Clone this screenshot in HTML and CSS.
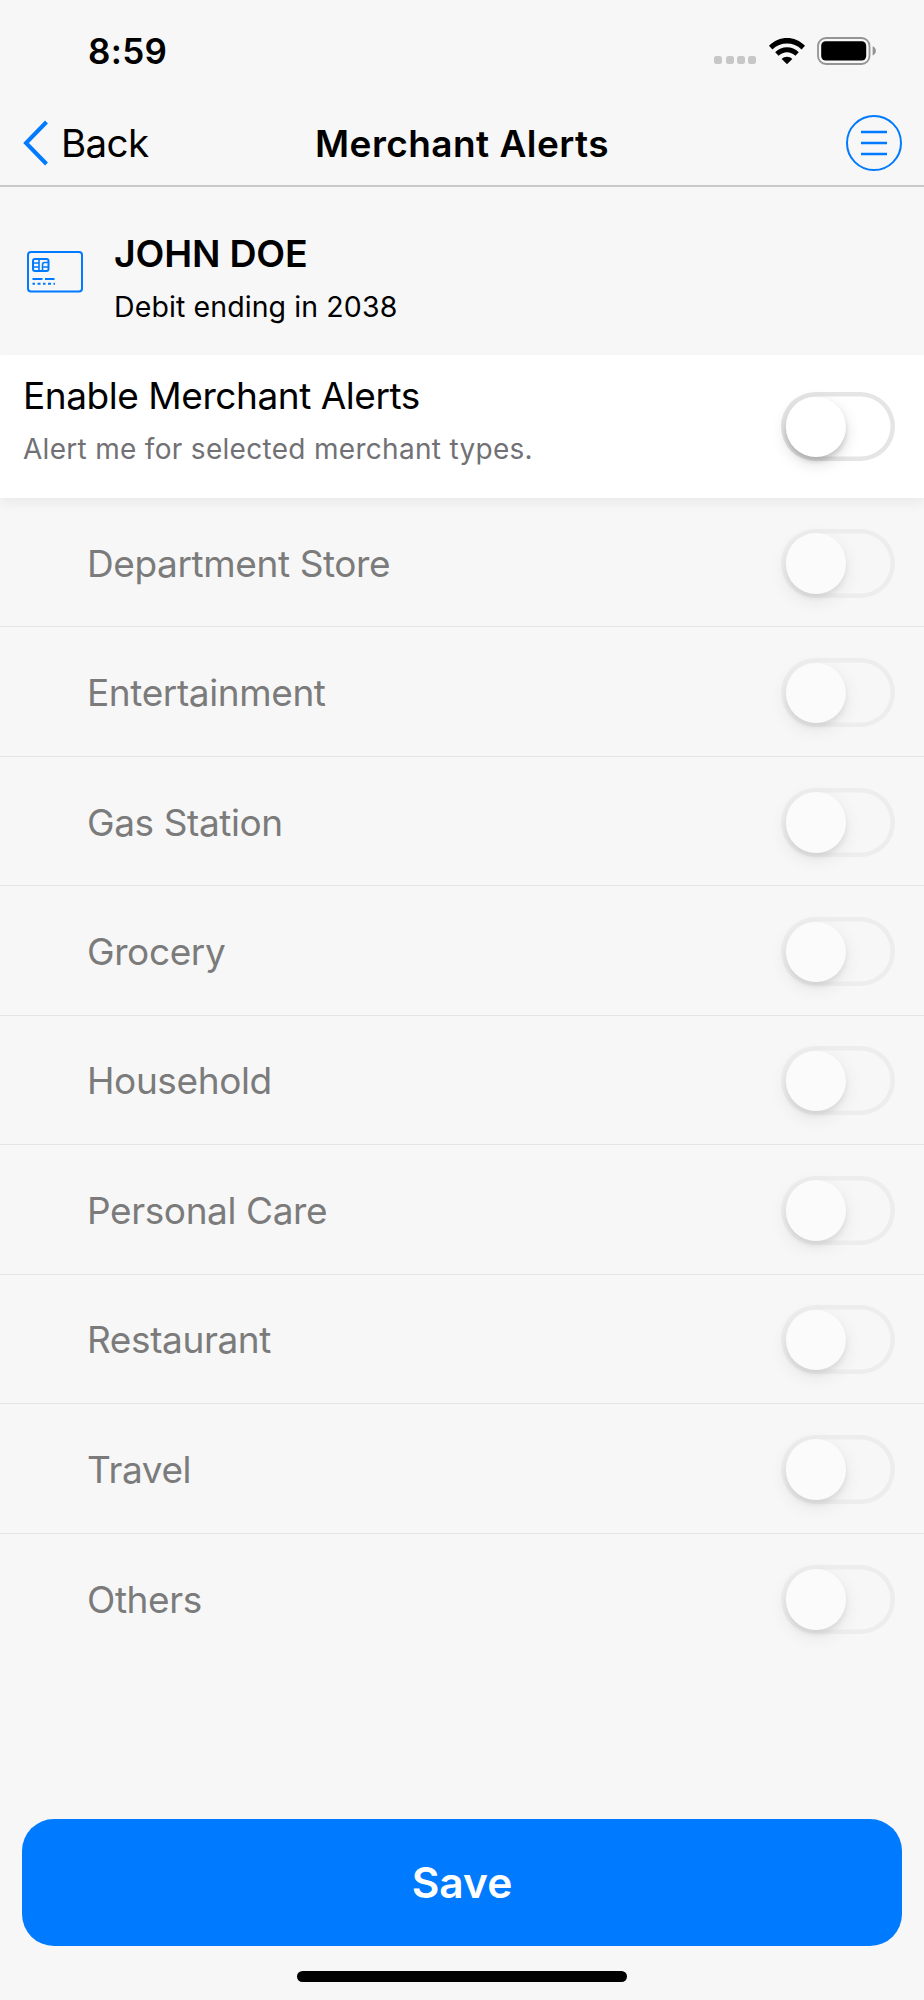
FILE: index.html
```html
<!DOCTYPE html>
<html lang="en">
<head>
    <meta charset="UTF-8">
    <meta name="viewport" content="width=device-width, initial-scale=1.0">
    <title>Merchant Alerts</title>
    <link rel="stylesheet" href="styles.css">
</head>
<body>
    <div class="screen">
        <div class="status-bar">
            <span class="time">8:59</span>
            <div class="status-icons">
                <div class="signal"><i></i><i></i><i></i><i></i></div>
                <svg class="wifi" width="36" height="26" viewBox="0 0 36 26">
                    <path d="M0 7.8C10 -2.6 26 -2.6 36 7.8L32.6 11.4C24.5 3.5 11.5 3.5 3.4 11.4Z"/>
                    <path d="M6.2 14.3C12.8 7.5 23.2 7.5 29.8 14.3L26.4 17.8C21.6 13.1 14.4 13.1 9.6 17.8Z"/>
                    <path d="M12.7 21C15.5 18.1 20.5 18.1 23.3 21L18 26.2Z"/>
                </svg>
                <svg class="battery" width="60" height="28" viewBox="0 0 60 28">
                    <rect x="1" y="1" width="51.5" height="26" rx="8" fill="none" stroke="#949494" stroke-width="1.8"/>
                    <rect x="4.2" y="4.3" width="45" height="19.2" rx="4.5"/>
                    <path d="M55.6 9.3C60 11 60 16.8 55.6 18.5Z" fill="#949494"/>
                </svg>
            </div>
        </div>

        <header class="nav-bar">
            <a class="back" href="#">
                <svg width="26" height="46" viewBox="0 0 26 46">
                    <path d="M24.5 2L4 23L24.5 44" fill="none" stroke="#007aff" stroke-width="4"/>
                </svg>
                <span>Back</span>
            </a>
            <h1 class="title">Merchant Alerts</h1>
            <button class="menu" aria-label="Menu">
                <svg width="56" height="56" viewBox="0 0 56 56" fill="none" stroke="#007aff">
                    <circle cx="28" cy="28" r="27" stroke-width="2"/>
                    <path d="M15 17H41M15 28H41M15 39H41" stroke-width="2.4"/>
                </svg>
            </button>
        </header>

        <section class="account">
            <svg class="card-icon" width="56" height="42" viewBox="0 0 56 42" fill="none" stroke="#007aff" stroke-width="2">
                <rect x="1" y="1" width="54" height="39.5" rx="3"/>
                <rect x="6" y="8" width="15.5" height="12" rx="2"/>
                <path d="M12 8V20M6 12H12M6 16H12M21.5 11.5H17.5Q15.5 11.5 15.5 14V20M15.5 16H21.5" stroke-width="1.6"/>
                <path d="M5.5 28H15.5M18 28H27.5"/>
                <path d="M5.5 32.7H8M10.5 32.7H13.5M16 32.7H18.5M21 32.7H24M26.5 32.7H28"/>
            </svg>
            <div>
                <div class="account-name">JOHN DOE</div>
                <div class="account-info">Debit ending in 2038</div>
            </div>
        </section>

        <section class="enable">
            <div>
                <div class="enable-title">Enable Merchant Alerts</div>
                <div class="enable-text">Alert me for selected merchant types.</div>
            </div>
            <span class="toggle"></span>
        </section>

        <ul class="merchants">
            <li><span>Department Store</span><span class="toggle disabled"></span></li>
            <li><span>Entertainment</span><span class="toggle disabled"></span></li>
            <li><span>Gas Station</span><span class="toggle disabled"></span></li>
            <li><span>Grocery</span><span class="toggle disabled"></span></li>
            <li><span>Household</span><span class="toggle disabled"></span></li>
            <li><span>Personal Care</span><span class="toggle disabled"></span></li>
            <li><span>Restaurant</span><span class="toggle disabled"></span></li>
            <li><span>Travel</span><span class="toggle disabled"></span></li>
            <li><span>Others</span><span class="toggle disabled"></span></li>
        </ul>

        <footer class="footer">
            <button class="save">Save</button>
            <div class="home-indicator"></div>
        </footer>
    </div>
</body>
</html>
```
FILE: styles.css
```css
:root {
    --blue: #007aff;
    --bg: #f7f7f7;
    --gray: #7b7b7b;
}

* {
    box-sizing: border-box;
    margin: 0;
    padding: 0;
}

body {
    font-family: Inter, sans-serif;
    background-color: var(--bg);
    color: #000;
}

button {
    border: none;
    background: none;
    font-family: inherit;
}

.screen {
    width: 924px;
    height: 2000px;
    display: flex;
    flex-direction: column;
    overflow: hidden;
}

/* status bar */
.status-bar {
    height: 100px;
    padding: 2px 47px 0 88px;
    display: flex;
    align-items: center;
    justify-content: space-between;
}

.time {
    font-size: 35px;
    font-weight: 600;
    line-height: 42px;
    letter-spacing: 0.3px;
}

.status-icons {
    display: flex;
    align-items: center;
}

.signal {
    display: flex;
    gap: 3.2px;
    margin: 17px 13px 0 0;
}

.signal i {
    width: 8px;
    height: 8px;
    border-radius: 2.5px;
    background-color: #c7c7c7;
}

.wifi {
    margin: 0 12px 1px 0;
}

.battery {
    margin-bottom: 1px;
}

/* navigation */
.nav-bar {
    height: 87px;
    padding: 0 22px;
    display: grid;
    grid-template-columns: 1fr auto 1fr;
    align-items: center;
    border-bottom: 2px solid #c9c9c9;
}

.back {
    display: flex;
    align-items: center;
    gap: 13px;
    color: #000;
    font-size: 38.5px;
    letter-spacing: -0.6px;
    text-decoration: none;
}

.title {
    font-size: 37px;
    font-weight: 600;
    line-height: 44px;
    letter-spacing: 0.45px;
    padding-top: 2px;
}

.menu {
    justify-self: end;
    height: 56px;
}

/* account */
.account {
    height: 168px;
    padding: 42px 27px 0;
    display: flex;
    gap: 31px;
}

.card-icon {
    margin-top: 22px;
}

.account-name {
    font-size: 37.5px;
    font-weight: 600;
    line-height: 50px;
    letter-spacing: -0.2px;
}

.account-info {
    font-size: 28.5px;
    line-height: 36px;
    margin-top: 10px;
    letter-spacing: 0.1px;
}

/* enable block */
.enable {
    position: relative;
    height: 143px;
    padding: 0 29px 0 23px;
    display: flex;
    align-items: center;
    justify-content: space-between;
    background-color: #fff;
    box-shadow: 0 5px 12px rgba(0, 0, 0, 0.06);
}

.enable-title {
    font-size: 37px;
    line-height: 48px;
    letter-spacing: -0.45px;
}

.enable-text {
    font-size: 28px;
    line-height: 36px;
    margin: 11px 0 15px;
    color: #717175;
    letter-spacing: 0.3px;
}

/* toggle */
.toggle {
    width: 114px;
    height: 69px;
    padding: 4.5px;
    border-radius: 35px;
    box-shadow: inset 0 0 0 4.5px #e5e5e5;
}

.toggle::before {
    content: "";
    display: block;
    width: 60.5px;
    height: 60.5px;
    border-radius: 50%;
    background-color: #fff;
    box-shadow: 0 6px 16px rgba(0, 0, 0, 0.14), 0 4px 5px rgba(0, 0, 0, 0.14);
}

.toggle.disabled {
    opacity: 0.5;
}

/* merchant list */
.merchants {
    list-style: none;
}

.merchants li {
    height: 129.45px;
    padding: 2px 29px 0 87px;
    display: flex;
    align-items: center;
    justify-content: space-between;
    border-bottom: 1px solid #e5e5e5;
    color: var(--gray);
    font-size: 37px;
    letter-spacing: -0.4px;
}

.merchants li:last-child {
    border-bottom: none;
}

/* bottom */
.footer {
    margin-top: auto;
    padding: 0 22px 18px;
}

.save {
    display: block;
    width: 100%;
    height: 127px;
    border-radius: 32px;
    background-color: var(--blue);
    color: #fff;
    font-size: 42.5px;
    font-weight: 600;
}

.home-indicator {
    width: 330px;
    height: 11px;
    margin: 25px auto 0;
    border-radius: 6px;
    background-color: #000;
}
```
